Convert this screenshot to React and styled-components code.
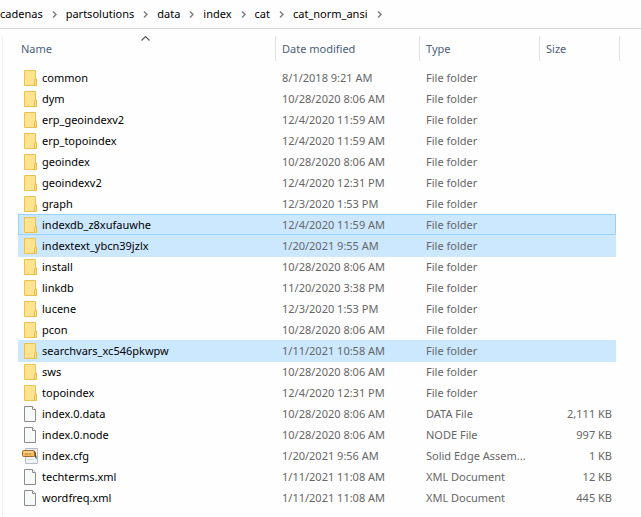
import React from "react";
import styled, { createGlobalStyle } from "styled-components";

const GlobalStyle = createGlobalStyle`
  * { box-sizing: border-box; }
  body {
    margin: 0;
    background: #fefefe;
    color: #000;
    font: 11px/20px "Noto Sans", "Open Sans", sans-serif;
  }
  button { font: inherit; }
`;

const Window = styled.main`
  display: flex;
  flex-direction: column;
  min-height: 100vh;
  overflow: hidden;
`;

const AddressBar = styled.nav`
  display: flex;
  align-items: center;
  height: 29px;
  border-bottom: 1px solid #d9d9d9;
  white-space: nowrap;
`;

const Crumb = styled.a`
  color: inherit;
  text-decoration: none;
`;

const CrumbArrow = styled.svg`
  flex: none;
  width: 5px;
  height: 7px;
  margin: 1px 9px 0;
  fill: none;
  stroke: #808080;
  stroke-width: 1.5;
`;

const ListPane = styled.section`
  flex: 1;
  margin: 7px 0 0 2px;
  padding: 0 25px 0 15px;
  border-left: 1px solid #f0f0f0;
`;

const FileTable = styled.table`
  width: 100%;
  table-layout: fixed;
  border-collapse: separate;
  border-spacing: 0;
`;

const Column = styled.col`
  width: ${({ $width }) => ($width ? `${$width}px` : "auto")};
`;

const HeaderCell = styled.th`
  position: relative;
  height: 31px;
  padding: 0;
  text-align: left;
  vertical-align: top;
  font-weight: 400;

  &::after {
    content: "";
    position: absolute;
    top: 0;
    right: ${({ $last }) => ($last ? "-4px" : "0")};
    width: 1px;
    height: 25px;
    background: #e2e2e2;
  }
`;

const SortButton = styled.button`
  width: 100%;
  height: 25px;
  padding: 0 0 0 ${({ $first }) => ($first ? "3px" : "6px")};
  border: 0;
  background: none;
  color: #4c607a;
  text-align: left;
`;

const SortMark = styled.svg`
  position: absolute;
  top: 0;
  left: 50%;
  width: 9px;
  height: 5px;
  margin-left: -6px;
  fill: none;
  stroke: #606060;
  stroke-width: 1.2;
`;

const Row = styled.tr`
  height: 21px;
  background: ${({ $selected }) => ($selected ? "#cce8ff" : "transparent")};
  box-shadow: ${({ $focused, $selected }) =>
    $focused
      ? "inset 0 0 0 1px #99d1ff, 0 1px #84c3f8"
      : $selected
        ? "0 1px #cce8ff"
        : "none"};
`;

const Cell = styled.td`
  height: 21px;
  padding: 0 4px 0 6px;
  overflow: hidden;
  color: #666;
  line-height: 21px;
  text-align: ${({ $right }) => ($right ? "right" : "left")};
  text-overflow: ellipsis;
  white-space: nowrap;
`;

const FileName = styled.div`
  display: flex;
  align-items: center;
  gap: 4px;
  height: 21px;
  margin-left: -2px;
  color: #000;
`;

const Icon = styled.svg`
  flex: none;
  width: 16px;
  height: 16px;
`;

const FolderIcon = () => (
  <Icon viewBox="0 0 16 16" aria-hidden="true">
    <path d="M2.5.5h11v15h-11z" fill="#ffe391" stroke="#e9c250" />
    <path d="M12.5 15.5v-5l1-1.5h1v6.5z" fill="#ffe28a" stroke="#e8bc3f" />
  </Icon>
);

const PageIcon = () => (
  <Icon viewBox="0 0 16 16" aria-hidden="true">
    <path d="M2.5.5h8l3 3v12h-11z" fill="#f8f9f9" stroke="#8c8c8c" />
    <path d="M10.5.5v3h3" fill="#fff" stroke="#8c8c8c" />
  </Icon>
);

const AssemblyIcon = () => (
  <Icon viewBox="0 0 16 16" aria-hidden="true">
    <path d="M3.5.5h12v15h-12z" fill="#f1f5f8" stroke="#b3bcc5" />
    <path d="M5 11.5h7" stroke="#d3dade" />
    <path d="M12 5.5l2.5 2.5v3.5l-2-3z" fill="#4d5560" />
    <rect x=".5" y="2.5" width="12" height="6" rx="1" fill="#f5b95c" stroke="#a36b30" />
    <path d="M2 4h9" stroke="#ffe5ae" />
    <path d="M3 6h3M7 6h2" stroke="#b9853d" />
    <path d="M12 3l1.500 2v4" fill="none" stroke="#704421" />
  </Icon>
);

const icons = { folder: FolderIcon, page: PageIcon, assembly: AssemblyIcon };

const path = ["cadenas", "partsolutions", "data", "index", "cat", "cat_norm_ansi"];

const columns = [
  { label: "Name" },
  { label: "Date modified", width: 144 },
  { label: "Type", width: 120 },
  { label: "Size", width: 76 },
];

const folder = (name, date, state = {}) => ({
  name, date, type: "File folder", size: "", icon: "folder", ...state,
});

const files = [
  folder("common", "8/1/2018 9:21 AM"),
  folder("dym", "10/28/2020 8:06 AM"),
  folder("erp_geoindexv2", "12/4/2020 11:59 AM"),
  folder("erp_topoindex", "12/4/2020 11:59 AM"),
  folder("geoindex", "10/28/2020 8:06 AM"),
  folder("geoindexv2", "12/4/2020 12:31 PM"),
  folder("graph", "12/3/2020 1:53 PM"),
  folder("indexdb_z8xufauwhe", "12/4/2020 11:59 AM", { selected: true, focused: true }),
  folder("indextext_ybcn39jzlx", "1/20/2021 9:55 AM", { selected: true }),
  folder("install", "10/28/2020 8:06 AM"),
  folder("linkdb", "11/20/2020 3:38 PM"),
  folder("lucene", "12/3/2020 1:53 PM"),
  folder("pcon", "10/28/2020 8:06 AM"),
  folder("searchvars_xc546pkwpw", "1/11/2021 10:58 AM", { selected: true }),
  folder("sws", "10/28/2020 8:06 AM"),
  folder("topoindex", "12/4/2020 12:31 PM"),
  { name: "index.0.data", date: "10/28/2020 8:06 AM", type: "DATA File", size: "2,111 KB", icon: "page" },
  { name: "index.0.node", date: "10/28/2020 8:06 AM", type: "NODE File", size: "997 KB", icon: "page" },
  { name: "index.cfg", date: "1/20/2021 9:56 AM", type: "Solid Edge Assem...", size: "1 KB", icon: "assembly" },
  { name: "techterms.xml", date: "1/11/2021 11:08 AM", type: "XML Document", size: "12 KB", icon: "page" },
  { name: "wordfreq.xml", date: "1/11/2021 11:08 AM", type: "XML Document", size: "445 KB", icon: "page" },
];

export default function App() {
  return (
    <Window>
      <GlobalStyle />
      <AddressBar>
        {path.map((part) => (
          <React.Fragment key={part}>
            <Crumb href={`#${part}`}>{part}</Crumb>
            <CrumbArrow viewBox="0 0 5 7" aria-hidden="true">
              <path d="M1 .5l3 3-3 3" />
            </CrumbArrow>
          </React.Fragment>
        ))}
      </AddressBar>
      <ListPane>
        <FileTable>
          <colgroup>
            {columns.map(({ label, width }) => (
              <Column key={label} $width={width} />
            ))}
          </colgroup>
          <thead>
            <tr>
              {columns.map(({ label }, i) => (
                <HeaderCell key={label} scope="col" $last={i === columns.length - 1}>
                  <SortButton type="button" $first={i === 0}>{label}</SortButton>
                  {i === 0 && (
                    <SortMark viewBox="0 0 9 5" aria-hidden="true">
                      <path d="M.5 4.5l4-4 4 4" />
                    </SortMark>
                  )}
                </HeaderCell>
              ))}
            </tr>
          </thead>
          <tbody>
            {files.map((file) => {
              const FileIcon = icons[file.icon];
              return (
                <Row key={file.name} $selected={file.selected} $focused={file.focused}>
                  <Cell>
                    <FileName>
                      <FileIcon />
                      {file.name}
                    </FileName>
                  </Cell>
                  <Cell>{file.date}</Cell>
                  <Cell>{file.type}</Cell>
                  <Cell $right>{file.size}</Cell>
                </Row>
              );
            })}
          </tbody>
        </FileTable>
      </ListPane>
    </Window>
  );
}
